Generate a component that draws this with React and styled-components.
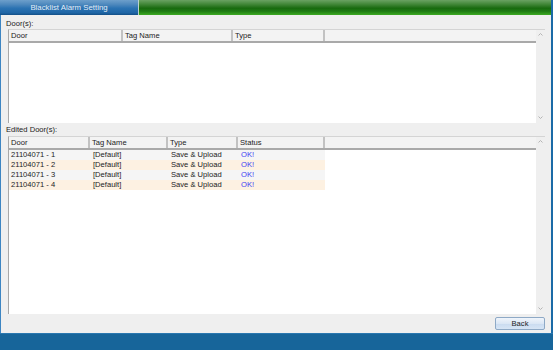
import React from "react";
import styled, { createGlobalStyle } from "styled-components";

const Global = createGlobalStyle`
  html, body { margin: 0; padding: 0; }
  body { width: 553px; height: 350px; overflow: hidden; font-family: "Liberation Sans", Arial, sans-serif; }
  * { box-sizing: border-box; }
`;

const Window = styled.div`
  width: 553px;
  height: 350px;
  display: flex;
  flex-direction: column;
  font-size: 7.6px;
  color: #222;
`;

const TitleBar = styled.div`
  height: 15px;
  display: flex;
  flex-shrink: 0;
`;

const Tab = styled.div`
  width: 138px;
  display: flex;
  align-items: center;
  justify-content: center;
  color: #e4edf6;
  font-size: 7.8px;
  background: linear-gradient(to bottom, #6d9fcb 0%, #4d88bd 30%, #2a72b2 55%, #1f66a6 85%, #134f86 100%);
`;

const TabSep = styled.div`
  width: 1px;
  background: #b9d2cc;
`;

const GreenFill = styled.div`
  flex: 1;
  background: linear-gradient(to bottom, #6aa262 0%, #3f8535 30%, #186a0e 55%, #1f7c14 75%, #3daa22 100%);
`;

const TitleEdge = styled.div`
  width: 2px;
  background: #1b6aa6;
`;

const Body = styled.div`
  flex: 1;
  display: flex;
  flex-direction: column;
  background: #efefef;
  border-left: 1px solid #3d85c2;
  border-right: 2px solid #1b6aa6;
  min-height: 0;
`;

const Label = styled.div`
  padding-left: 5px;
  line-height: ${(p) => p.$h}px;
  height: ${(p) => p.$h}px;
  margin-top: ${(p) => p.$mt || 0}px;
  flex-shrink: 0;
`;

const ListBox = styled.div`
  margin: 0 6px 0 7px;
  height: ${(p) => (p.$h ? `${p.$h}px` : "auto")};
  flex: ${(p) => (p.$grow ? 1 : "none")};
  display: flex;
  background: #fff;
  border-top: 1px solid #d4d4d4;
  border-left: 1px solid #a8a8a8;
  min-height: 0;
`;

const ListMain = styled.div`
  flex: 1;
  display: flex;
  flex-direction: column;
  min-width: 0;
`;

const Header = styled.div`
  display: flex;
  height: 13px;
  background: #f3f3f3;
  border-bottom: 2px solid #a9a9a9;
  flex-shrink: 0;
`;

const HeadCell = styled.div`
  width: ${(p) => p.$w}px;
  flex-shrink: 0;
  padding-left: 2px;
  line-height: 11px;
  border-right: 2px solid #c2c2c2;
  white-space: nowrap;
  overflow: hidden;
`;

const Row = styled.div`
  display: flex;
  height: 10px;
  align-self: flex-start;
  background: ${(p) => (p.$alt ? "#fdf1e2" : "#f5f5f5")};
`;

const Cell = styled.div`
  width: ${(p) => p.$w}px;
  flex-shrink: 0;
  padding-left: ${(p) => (p.$first ? 2 : 3)}px;
  line-height: 10px;
  white-space: nowrap;
  color: ${(p) => (p.$ok ? "#3d3df2" : "#222")};
`;

const ScrollBar = styled.div`
  width: 9px;
  flex-shrink: 0;
  background: #efefef;
  display: flex;
  flex-direction: column;
  justify-content: space-between;
  align-items: center;
  padding: 3px 0 4px;
`;

const Chevron = ({ down }) => (
  <svg width="5" height="3" viewBox="0 0 5 3">
    <path
      d={down ? "M0.5 0.5 L2.5 2.5 L4.5 0.5" : "M0.5 2.5 L2.5 0.5 L4.5 2.5"}
      fill="none"
      stroke="#b4b4b4"
      strokeWidth="1"
    />
  </svg>
);

const ButtonRow = styled.div`
  height: 19px;
  flex-shrink: 0;
  display: flex;
  justify-content: flex-end;
  align-items: flex-start;
  padding: 3px 6px 0 0;
`;

const Button = styled.button`
  width: 50px;
  height: 13px;
  padding: 0;
  font-family: "Liberation Sans", Arial, sans-serif;
  font-size: 7.6px;
  color: #222;
  border: 1px solid #8ea9c6;
  border-radius: 2px;
  background: linear-gradient(to bottom, #f0f5fb 0%, #dbe7f5 50%, #c9dbf0 51%, #d7e5f5 100%);
`;

const BottomBar = styled.div`
  height: 17px;
  flex-shrink: 0;
  background: #17659a;
  border-top: 1px solid #2a78b0;
`;

const topCols = [
  { name: "Door", w: 114 },
  { name: "Tag Name", w: 110 },
  { name: "Type", w: 92 },
];

const botCols = [
  { name: "Door", w: 81 },
  { name: "Tag Name", w: 78 },
  { name: "Type", w: 70 },
  { name: "Status", w: 87 },
];

const rows = [1, 2, 3, 4].map((n) => ["21104071 - " + n, "[Default]", "Save & Upload", "OK!"]);

export default function App() {
  return (
    <>
      <Global />
      <Window>
        <TitleBar>
          <Tab>Blacklist Alarm Setting</Tab>
          <TabSep />
          <GreenFill />
          <TitleEdge />
        </TitleBar>
        <Body>
          <Label $h={10} $mt={4}>Door(s):</Label>
          <ListBox $h={94}>
            <ListMain>
              <Header>
                {topCols.map((c) => (
                  <HeadCell key={c.name} $w={c.w}>{c.name}</HeadCell>
                ))}
              </Header>
            </ListMain>
            <ScrollBar>
              <Chevron />
              <Chevron down />
            </ScrollBar>
          </ListBox>
          <Label $h={13}>Edited Door(s):</Label>
          <ListBox $grow>
            <ListMain>
              <Header>
                {botCols.map((c) => (
                  <HeadCell key={c.name} $w={c.w}>{c.name}</HeadCell>
                ))}
              </Header>
              {rows.map((r, i) => (
                <Row key={i} $alt={i % 2 === 1}>
                  {r.map((v, j) => (
                    <Cell key={j} $w={botCols[j].w} $first={j === 0} $ok={j === 3}>
                      {v}
                    </Cell>
                  ))}
                </Row>
              ))}
            </ListMain>
            <ScrollBar>
              <Chevron />
              <Chevron down />
            </ScrollBar>
          </ListBox>
          <ButtonRow>
            <Button>Back</Button>
          </ButtonRow>
        </Body>
        <BottomBar />
      </Window>
    </>
  );
}
